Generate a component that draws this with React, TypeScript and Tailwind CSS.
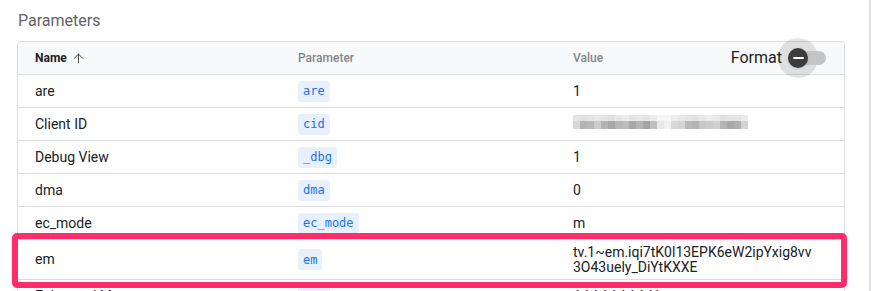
import React from 'react';
import { ArrowUp } from 'lucide-react';

type Row = { name: string; param: string; value: React.ReactNode; tall?: boolean };

// pixelated blur for the redacted client id
const blurTop = [
  'bg-[#e4e4e4]', 'bg-[#e0e0e0]', 'bg-[#e4e4e4]', 'bg-[#e8e8e8]', 'bg-[#e4e4e4]', 'bg-[#e0e0e0]',
  'bg-[#e8e8e8]', 'bg-[#ececec]', 'bg-[#e4e4e4]', 'bg-[#e8e8e8]', 'bg-[#e4e4e4]', 'bg-[#ececec]',
  'bg-[#f4f4f4]', 'bg-[#f4f4f4]', 'bg-[#ececec]', 'bg-[#e8e8e8]', 'bg-[#e4e4e4]', 'bg-[#e0e0e0]',
  'bg-[#e8e8e8]', 'bg-[#ececec]', 'bg-[#e8e8e8]', 'bg-[#e0e0e0]', 'bg-[#e4e4e4]', 'bg-[#e4e4e4]',
  'bg-[#ececec]',
];
const blurBottom = [
  'bg-[#d8d8d8]', 'bg-[#b4b4b4]', 'bg-[#b8b8b8]', 'bg-[#cccccc]', 'bg-[#b4b4b4]', 'bg-[#a8a8a8]',
  'bg-[#b8b8b8]', 'bg-[#bcbcbc]', 'bg-[#a8a8a8]', 'bg-[#b4b4b4]', 'bg-[#a4a4a4]', 'bg-[#c0c0c0]',
  'bg-[#e8e8e8]', 'bg-[#f0f0f0]', 'bg-[#d8d8d8]', 'bg-[#d4d4d4]', 'bg-[#b8b8b8]', 'bg-[#b4b4b4]',
  'bg-[#c8c8c8]', 'bg-[#cccccc]', 'bg-[#d0d0d0]', 'bg-[#b4b4b4]', 'bg-[#a8a8a8]', 'bg-[#b0b0b0]',
  'bg-[#d4d4d4]',
];

const Blurred = () => (
  <div className="flex flex-col mb-[4px]">
    <div className="flex">
      {blurTop.map((c, i) => <div key={i} className={`w-[7px] h-[6px] ${c}`} />)}
    </div>
    <div className="flex">
      {blurBottom.map((c, i) => <div key={i} className={`w-[7px] h-[8px] ${c}`} />)}
    </div>
  </div>
);

const rows: Row[] = [
  { name: 'are', param: 'are', value: '1' },
  { name: 'Client ID', param: 'cid', value: <Blurred /> },
  { name: 'Debug View', param: '_dbg', value: '1' },
  { name: 'dma', param: 'dma', value: '0' },
  { name: 'ec_mode', param: 'ec_mode', value: 'm' },
  {
    name: 'em',
    param: 'em',
    tall: true,
    value: (
      <div className="whitespace-nowrap leading-[15px]">
        tv.1~em.iqi7tK0l13EPK6eW2ipYxig8vv
        <br />
        3O43uely_DiYtKXXE
      </div>
    ),
  },
  { name: 'Enhanced Measurement', param: '_eu', value: 'AAAAAAAAAI' },
];

const Chip = ({ children }: { children: React.ReactNode }) => (
  <span className="inline-flex items-center h-[21px] px-[5px] rounded-[3px] bg-[#e8f0fe] text-[#1a73e8] text-[12px] font-['DejaVu_Sans_Mono',monospace]">
    {children}
  </span>
);

const FormatToggle = () => (
  <div className="flex items-center ml-auto">
    <span className="text-[16px] text-[#202124] relative z-10">Format</span>
    <div className="relative w-[38px] h-[20px] ml-[6px]">
      <div className="absolute left-[-10px] top-[-10px] w-[40px] h-[40px] rounded-full bg-black/10" />
      <div className="absolute inset-x-0 top-[3px] h-[14px] rounded-full bg-[#c4c4c4]" />
      <div className="absolute left-0 top-0 w-[20px] h-[20px] rounded-full bg-[#3c3c3c] flex items-center justify-center shadow-sm">
        <div className="w-[11px] h-[2px] bg-white rounded-full" />
      </div>
    </div>
  </div>
);

export default function App() {
  return (
    <div className="relative w-[873px] h-[291px] overflow-hidden bg-white flex font-['Roboto',sans-serif]">
      <div className="w-[869px] pl-[17px] pt-[9px]">
        <h2 className="pl-[1px] text-[16px] leading-[24px] text-[#5f6368] font-normal">Parameters</h2>

        <div className="mt-[8px] w-[828px] border border-[#dadce0] rounded-[4px]">
          {/* header */}
          <div className="flex h-[33px] items-center bg-[#f8f9fa] border-b border-[#dadce0] rounded-t-[4px] text-[12px]">
            <div className="w-[263px] pl-[17px] flex items-center gap-[4px] font-bold text-[#202124]">
              Name <ArrowUp size={15} strokeWidth={1.5} className="text-[#3c4043]" />
            </div>
            <div className="w-[275px] pl-[17px] font-medium text-[#80868b]">Parameter</div>
            <div className="flex-1 pl-[17px] pr-[18px] flex items-center">
              <span className="font-medium text-[#80868b]">Value</span>
              <FormatToggle />
            </div>
          </div>

          {/* rows */}
          {rows.map(r => (
            <div
              key={r.name}
              className={`flex items-center border-b border-[#dadce0] text-[14px] text-[#202124] ${r.tall ? 'h-[40px]' : 'h-[33px]'}`}
            >
              <div className="w-[263px] pl-[17px]">{r.name}</div>
              <div className="w-[275px] pl-[17px]"><Chip>{r.param}</Chip></div>
              <div className="flex-1 pl-[17px]">{r.value}</div>
            </div>
          ))}
        </div>
      </div>
      <div className="w-[2px] bg-[#e3e3e3]" />
      <div className="w-[2px] bg-white" />

      {/* highlight annotation */}
      <div className="absolute left-[12px] top-[233px] w-[835px] h-[55px] border-[6px] border-[#ff2d6b] rounded-[5px] pointer-events-none" />
    </div>
  );
}
